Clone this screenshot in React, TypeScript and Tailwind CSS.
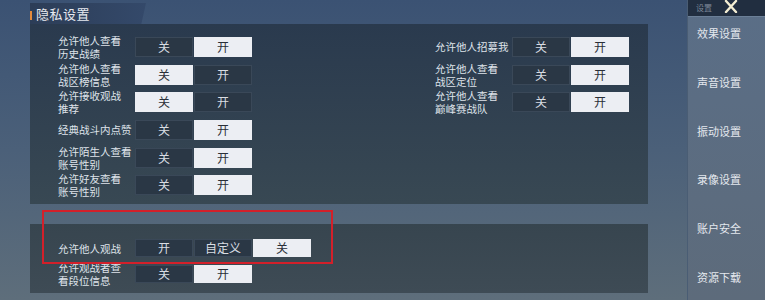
import React from 'react';

type Opt = { label: string; on: boolean };

const leftRows: { label: string[]; value: 'on' | 'off' }[] = [
  { label: ['允许他人查看', '历史战绩'], value: 'on' },
  { label: ['允许他人查看', '战区榜信息'], value: 'off' },
  { label: ['允许接收观战', '推荐'], value: 'off' },
  { label: ['经典战斗内点赞'], value: 'on' },
  { label: ['允许陌生人查看', '账号性别'], value: 'on' },
  { label: ['允许好友查看', '账号性别'], value: 'on' },
];

const rightRows: { label: string[]; value: 'on' | 'off' }[] = [
  { label: ['允许他人招募我'], value: 'on' },
  { label: ['允许他人查看', '战区定位'], value: 'on' },
  { label: ['允许他人查看', '巅峰赛战队'], value: 'on' },
];

const menu = ['效果设置', '声音设置', '振动设置', '录像设置', '账户安全', '资源下载'];

function Segmented({ options, height }: { options: Opt[]; height: string }) {
  return (
    <div className="flex gap-px">
      {options.map((o, i) => (
        <div
          key={i}
          className={`${height} w-[58px] flex items-center justify-center text-[12px] ${
            o.on ? 'bg-[#eceef3] text-[#2a2f37]' : 'bg-[#2a3745] text-[#d9dde3] border border-[#3a4858]'
          }`}
        >
          {o.label}
        </div>
      ))}
    </div>
  );
}

function Label({ lines }: { lines: string[] }) {
  return (
    <div className="w-[77px] text-[10.5px] leading-[13px] text-[#dfe3ea]">
      {lines.map((l, i) => (
        <div key={i} className="whitespace-nowrap">{l}</div>
      ))}
    </div>
  );
}

function Row({ label, value }: { label: string[]; value: 'on' | 'off' }) {
  return (
    <div className="h-[27.7px] flex items-center">
      <Label lines={label} />
      <Segmented
        height="h-[20px]"
        options={[
          { label: '关', on: value === 'off' },
          { label: '开', on: value === 'on' },
        ]}
      />
    </div>
  );
}

export default function App() {
  return (
    <div className="relative w-[765px] h-[300px] overflow-hidden flex bg-gradient-to-b from-[#3b5273] via-[#4b6079] to-[#5e6e7b] font-['Noto_Sans_CJK_SC',sans-serif]">
      {/* Main area */}
      <div className="w-[687px] pl-[30px] flex flex-col">
        {/* Title tab */}
        <div className="h-[24px] flex items-end">
          <div className="relative h-[21px] w-[116px] bg-gradient-to-r from-[#2c3d57] to-[#34496a] [clip-path:polygon(0_0,100%_0,96%_100%,0_100%)] flex items-center pl-[6px]">
            <div className="absolute left-0 top-[8px] w-[2px] h-[9px] bg-[#e38a3c]" />
            <span className="text-[13px] text-[#e6e9ef] tracking-[0.5px]">隐私设置</span>
          </div>
        </div>

        {/* Panel 1 */}
        <div className="w-[618px] h-[180px] bg-gradient-to-b from-[#2a3a4e] to-[#384853] pt-[9px] pl-[28px] flex">
          <div className="w-[377px] flex flex-col">
            {leftRows.map((r, i) => (
              <Row key={i} label={r.label} value={r.value} />
            ))}
          </div>
          <div className="flex flex-col">
            {rightRows.map((r, i) => (
              <Row key={i} label={r.label} value={r.value} />
            ))}
          </div>
        </div>

        {/* Panel 2 */}
        <div className="mt-[20px] w-[618px] h-[69px] bg-gradient-to-b from-[#37454f] to-[#3e4b55] pt-[11px] pl-[28px] flex flex-col">
          <div className="h-[26px] flex items-center">
            <Label lines={['允许他人观战']} />
            <Segmented
              height="h-[18px]"
              options={[
                { label: '开', on: false },
                { label: '自定义', on: false },
                { label: '关', on: true },
              ]}
            />
          </div>
          <div className="h-[26px] flex items-center">
            <Label lines={['允许观战者查', '看段位信息']} />
            <Segmented
              height="h-[18px]"
              options={[
                { label: '关', on: false },
                { label: '开', on: true },
              ]}
            />
          </div>
        </div>
      </div>

      {/* Sidebar */}
      <div className="flex-1 flex flex-col bg-gradient-to-b from-[#5a6e87] to-[#5d6b7b] border-l border-[#4a5d74]">
        <div className="h-[17px] bg-[#212e40] flex items-center pl-[8px] gap-[12px] border-b border-[#6b7f97]">
          <span className="text-[8px] text-[#7c8797]">设置</span>
          <svg width="14" height="13" viewBox="0 0 14 13" className="-mt-[3px]">
            <path d="M2 1 L12 12 M12 1 L2 12" stroke="#f3edd2" strokeWidth="2.4" strokeLinecap="round" />
          </svg>
        </div>
        <div className="mt-[10px] pl-[9px] flex flex-col gap-[36.8px]">
          {menu.map((m) => (
            <div key={m} className="h-[12px] leading-[12px] text-[11px] text-[#e4e8ee]">
              {m}
            </div>
          ))}
        </div>
      </div>

      {/* Red annotation box */}
      <div className="absolute left-[42px] top-[210px] w-[291px] h-[54px] border-2 border-[#d3202a]" />
    </div>
  );
}
